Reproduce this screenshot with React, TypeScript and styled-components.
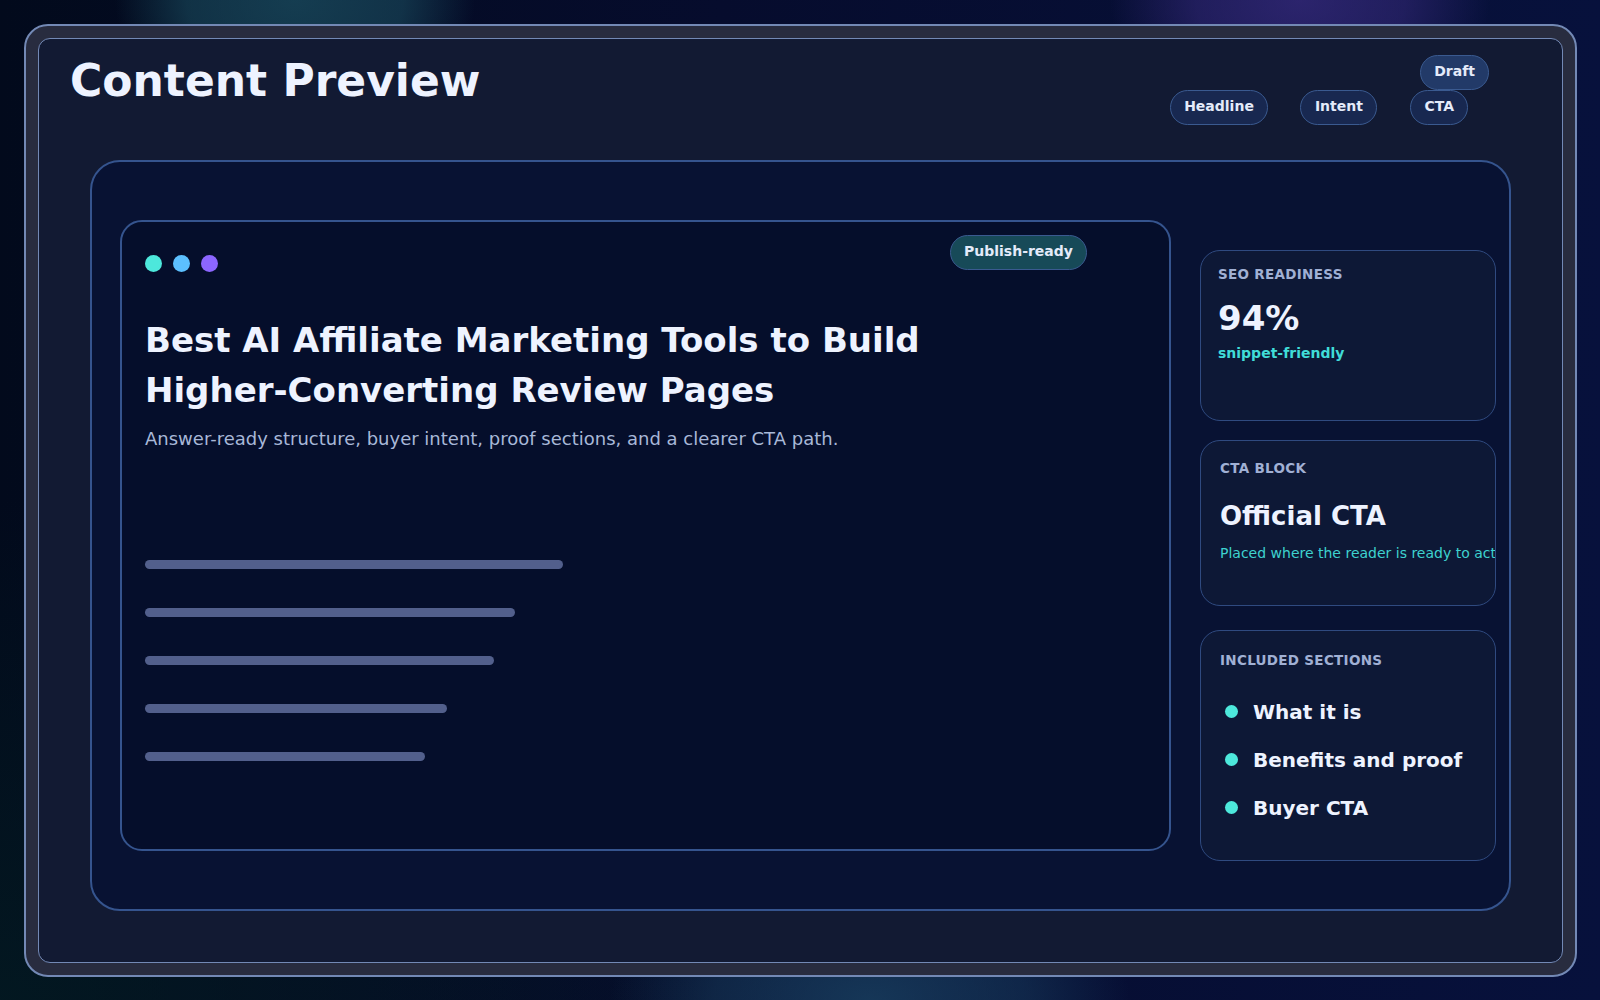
import React from "react";
import styled, { createGlobalStyle } from "styled-components";

const Global = createGlobalStyle`
  html, body { margin: 0; padding: 0; width: 1600px; height: 1000px; overflow: hidden; }
  body { font-family: "DejaVu Sans", sans-serif; color: #eef3ff; }
  * { box-sizing: border-box; }
`;

const Stage = styled.div`
  width: 1600px;
  height: 1000px;
  padding: 24px 23px 23px 24px;
  overflow: hidden;
  background:
    radial-gradient(ellipse 180px 130px at 295px 0px, rgba(28, 82, 100, 0.7) 0%, rgba(28, 82, 100, 0.55) 60%, transparent 100%),
    radial-gradient(ellipse 190px 130px at 1300px 0px, rgba(58, 44, 130, 0.72) 0%, rgba(58, 44, 130, 0.5) 55%, transparent 100%),
    radial-gradient(ellipse 260px 140px at 870px 1000px, rgba(28, 72, 104, 0.7) 0%, rgba(28, 72, 104, 0.42) 60%, transparent 100%),
    radial-gradient(ellipse 800px 500px at 0px 1000px, rgba(3, 28, 34, 0.75), transparent 100%),
    linear-gradient(90deg, #020a1c 0%, #060c2d 45%, #07113c 100%);
`;

const Frame = styled.div`
  height: 953px;
  padding: 12px;
  border: 2px solid #7389b5;
  border-radius: 24px;
  background: #282c3f;
`;

const Screen = styled.div`
  height: 100%;
  display: flex;
  flex-direction: column;
  border: 1px solid #7389b5;
  border-radius: 12px;
  background: #121a33;
`;

const Header = styled.header`
  height: 121px;
  flex: none;
  display: flex;
  justify-content: space-between;
  align-items: flex-start;
  padding: 15px 94px 0 31px;
`;

const Title = styled.h1`
  margin: 0;
  font-size: 44px;
  line-height: 54px;
  font-weight: 700;
  color: #eef3ff;
`;

const PillArea = styled.div`
  display: flex;
  flex-direction: column;
  align-items: flex-end;
  margin-top: 1px;
`;

const DraftPill = styled.span`
  height: 35px;
  margin-right: -21px;
  padding: 0 13px 3px;
  display: flex;
  align-items: center;
  border: 1px solid #3a5a90;
  border-radius: 18px;
  background: #223a68;
  font-size: 14px;
  font-weight: 700;
  color: #e4ebfa;
`;

const PillRow = styled.div`
  display: flex;
  gap: 32px;
`;

const Pill = styled.span`
  height: 35px;
  padding: 0 13.5px 3px;
  display: flex;
  align-items: center;
  border: 1px solid #3a5a90;
  border-radius: 18px;
  background: #182850;
  font-size: 14px;
  font-weight: 700;
  color: #e4ebfa;

  &:last-child {
    margin-left: 1px;
    padding: 0 13px 3px;
  }
`;

const Panel = styled.section`
  width: 1421px;
  height: 751px;
  margin-left: 51px;
  padding: 58px 14px 0 28px;
  display: flex;
  align-items: flex-start;
  gap: 29px;
  border: 2px solid #35548e;
  border-radius: 30px;
  background: #081233;
`;

const MainCard = styled.article`
  position: relative;
  width: 1051px;
  height: 631px;
  flex: none;
  padding: 33px 24px 0 23px;
  border: 2px solid #35548e;
  border-radius: 22px;
  background: #050e2b;
`;

const Status = styled.span`
  position: absolute;
  top: 13px;
  left: 828px;
  height: 35px;
  padding: 0 13px 3px;
  display: flex;
  align-items: center;
  border: 1px solid #3a5a90;
  border-radius: 18px;
  background: #174a58;
  font-size: 14px;
  font-weight: 700;
  color: #e4ebfa;
`;

const Dots = styled.div`
  display: flex;
  gap: 11px;
`;

const Dot = styled.i<{ $color: string }>`
  width: 17px;
  height: 17px;
  border-radius: 50%;
  background: ${(p) => p.$color};
`;

const Headline = styled.h2`
  margin: 43px 0 0;
  font-size: 34px;
  line-height: 50px;
  font-weight: 700;
  color: #eef3ff;
`;

const Sub = styled.p`
  margin: 9px 0 0;
  font-size: 18px;
  line-height: 30px;
  color: #a8b8d8;
`;

const Bars = styled.div`
  margin-top: 106px;
  display: flex;
  flex-direction: column;
  gap: 39px;
`;

const Bar = styled.div<{ $w: number }>`
  width: ${(p) => p.$w}px;
  height: 9px;
  border-radius: 5px;
  background: #525f8c;
`;

const Side = styled.aside`
  width: 296px;
  flex: none;
  margin-top: 30px;
  display: flex;
  flex-direction: column;
`;

const SideCard = styled.div<{ $h: number; $top: number; $left: number; $after: number }>`
  height: ${(p) => p.$h}px;
  margin-bottom: ${(p) => p.$after}px;
  padding: ${(p) => p.$top}px 0 0 ${(p) => p.$left}px;
  border: 1px solid #2f4a80;
  border-radius: 20px;
  background: #0d1836;
  overflow: hidden;
`;

const Label = styled.div`
  font-size: 13.5px;
  line-height: 16px;
  font-weight: 700;
  letter-spacing: 0.3px;
  color: #a0b0d4;
`;

const Metric = styled.div`
  margin-top: 14px;
  font-size: 34px;
  line-height: 44px;
  font-weight: 700;
  color: #eef3ff;
`;

const Note = styled.div`
  margin-top: 3px;
  font-size: 14px;
  line-height: 20px;
  font-weight: 700;
  color: #40dcd8;
`;

const CtaTitle = styled.div`
  margin-top: 22px;
  font-size: 26px;
  line-height: 36px;
  font-weight: 700;
  color: #eef3ff;
`;

const CtaNote = styled.div`
  margin-top: 9px;
  font-size: 14px;
  line-height: 20px;
  white-space: nowrap;
  color: #3ed2cf;
`;

const List = styled.ul`
  margin: 30px 0 0;
  padding: 0 0 0 5px;
  list-style: none;
  display: flex;
  flex-direction: column;
  gap: 20px;
`;

const Item = styled.li`
  display: flex;
  align-items: center;
  gap: 15px;
  height: 28px;
  font-size: 20px;
  font-weight: 700;
  color: #eef3ff;
`;

const Bullet = styled.i`
  width: 13px;
  height: 13px;
  margin-top: -1px;
  border-radius: 50%;
  background: #4de8dc;
`;

export default function App() {
  return (
    <>
      <Global />
      <Stage>
        <Frame>
          <Screen>
            <Header>
              <Title>Content Preview</Title>
              <PillArea>
                <DraftPill>Draft</DraftPill>
                <PillRow>
                  <Pill>Headline</Pill>
                  <Pill>Intent</Pill>
                  <Pill>CTA</Pill>
                </PillRow>
              </PillArea>
            </Header>
            <Panel>
              <MainCard>
                <Status>Publish-ready</Status>
                <Dots>
                  <Dot $color="#4de8dc" />
                  <Dot $color="#5cc0ff" />
                  <Dot $color="#8c66ff" />
                </Dots>
                <Headline>
                  Best AI Affiliate Marketing Tools to Build
                  <br />
                  Higher-Converting Review Pages
                </Headline>
                <Sub>Answer-ready structure, buyer intent, proof sections, and a clearer CTA path.</Sub>
                <Bars>
                  {[418, 370, 349, 302, 280].map((w) => (
                    <Bar key={w} $w={w} />
                  ))}
                </Bars>
              </MainCard>
              <Side>
                <SideCard $h={171} $top={15} $left={17} $after={19}>
                  <Label>SEO READINESS</Label>
                  <Metric>94%</Metric>
                  <Note>snippet-friendly</Note>
                </SideCard>
                <SideCard $h={166} $top={19} $left={19} $after={24}>
                  <Label>CTA BLOCK</Label>
                  <CtaTitle>Official CTA</CtaTitle>
                  <CtaNote>Placed where the reader is ready to act</CtaNote>
                </SideCard>
                <SideCard $h={231} $top={21} $left={19} $after={0}>
                  <Label>INCLUDED SECTIONS</Label>
                  <List>
                    {["What it is", "Benefits and proof", "Buyer CTA"].map((t) => (
                      <Item key={t}>
                        <Bullet />
                        {t}
                      </Item>
                    ))}
                  </List>
                </SideCard>
              </Side>
            </Panel>
          </Screen>
        </Frame>
      </Stage>
    </>
  );
}
